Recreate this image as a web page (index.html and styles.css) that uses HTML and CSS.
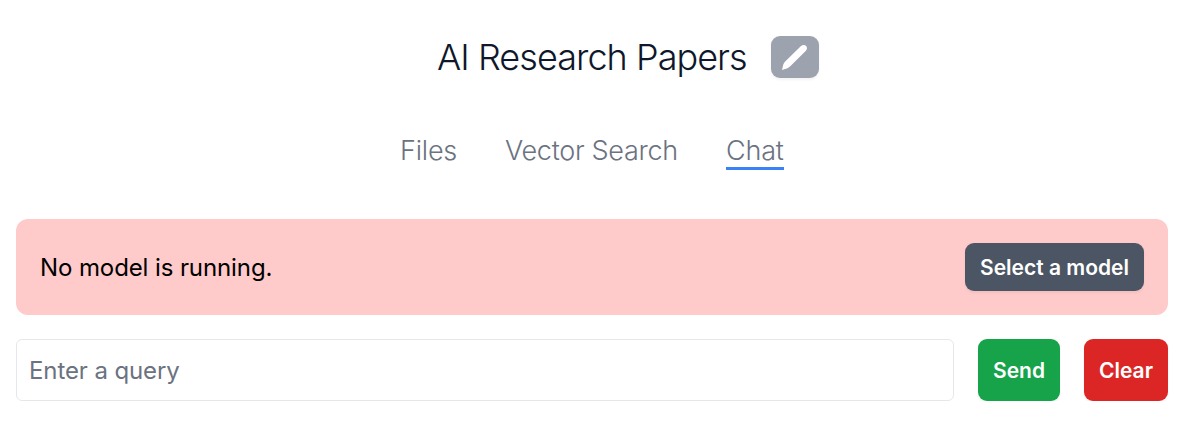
FILE: index.html
```html
<!DOCTYPE html>
<html lang="en">
<head>
<meta charset="utf-8">
<title>AI Research Papers</title>
<link rel="stylesheet" href="styles.css">
</head>
<body>
<main class="page">
  <header class="heading">
    <h1 class="title">AI Research Papers</h1>
    <button class="edit" aria-label="Edit name">
      <svg class="pencil" viewBox="0 0 48 42"><path d="M11 34L12.300 28.500Q12.800 26.800 14.200 25.400L30 10.100Q32.600 8 35 9.800Q37 12.200 34.900 14.800L19.500 30Q18 31.500 16.500 32.200Z" fill="#fff"/></svg>
    </button>
  </header>
  <nav class="tabs">
    <a class="tab tab-files">Files</a>
    <a class="tab tab-search">Vector Search</a>
    <a class="tab tab-active">Chat</a>
  </nav>
  <section class="alert">
    <span class="alert-text">No model is running.</span>
    <button class="button select">Select a model</button>
  </section>
  <form class="query">
    <input class="field" type="text" placeholder="Enter a query">
    <button class="button send" type="button">Send</button>
    <button class="button clear" type="button">Clear</button>
  </form>
</main>
</body>
</html>
```
FILE: styles.css
```css
* { box-sizing: border-box; }
body { margin: 0; background: #fff; color: #000; font-family: Inter, sans-serif; font-size: 24px; line-height: 36px; }
button, input { font: inherit; border: 0; }
.page { width: 1184px; padding: 36px 16px 0; }
.heading { display: flex; align-items: center; gap: 24px; height: 42px; padding-left: 421px; }
.title { margin: 0; width: 310px; font-size: 36px; font-weight: 300; line-height: 42px; letter-spacing: -0.95px; color: #0f172a; white-space: nowrap; }
.edit { width: 48px; height: 42px; padding: 0; border-radius: 9px; background: #9ca3af; box-shadow: 0 1.5px 3px rgba(0,0,0,.05); }
.pencil { display: block; width: 48px; height: 42px; }
.tabs { display: flex; gap: 48px; margin-top: 54px; height: 38px; padding-left: 384px; }
.tab { padding-top: 1px; font-size: 27px; font-weight: 300; line-height: 35px; color: #6b7280; white-space: nowrap; }
.tab-files { width: 57px; letter-spacing: -0.2px; }
.tab-search { width: 173px; letter-spacing: -0.3px; }
.tab-active { width: 58px; border-bottom: 3px solid #3b82f6; letter-spacing: -0.2px; }
.alert { display: flex; align-items: center; justify-content: space-between; height: 96px; margin-top: 49px; padding: 0 24px; border-radius: 12px; background: #fecaca; }
.alert-text { padding-top: 2px; letter-spacing: -0.1px; }
.button { padding: 2px 0 0; border-radius: 9px; color: #fff; font-size: 21px; font-weight: 600; white-space: nowrap; box-shadow: 0 1.5px 3px rgba(0,0,0,.05); }
.select { width: 179px; height: 48px; background: #4b5563; }
.query { display: flex; gap: 24px; margin-top: 24px; height: 62px; }
.field { flex: 1; min-width: 0; padding: 2px 12px 0; border: 1px solid #e5e7eb; border-radius: 6px; letter-spacing: -0.1px; }
.field::placeholder { color: #6b7280; opacity: 1; }
.send { width: 82px; background: #16a34a; }
.clear { width: 84px; background: #dc2626; }
```
